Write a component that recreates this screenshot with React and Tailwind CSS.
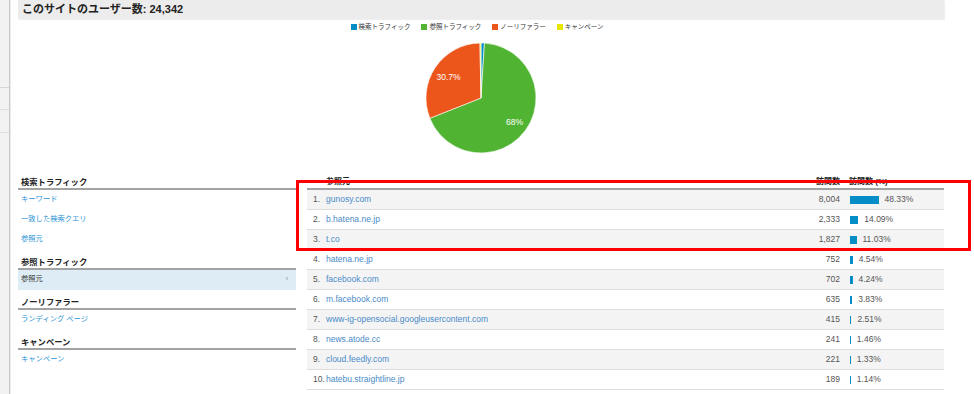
import React from "react";

const rows = [
  [1, "gunosy.com", "8,004", 48.33],
  [2, "b.hatena.ne.jp", "2,333", 14.09],
  [3, "t.co", "1,827", 11.03],
  [4, "hatena.ne.jp", "752", 4.54],
  [5, "facebook.com", "702", 4.24],
  [6, "m.facebook.com", "635", 3.83],
  [7, "www-ig-opensocial.googleusercontent.com", "415", 2.51],
  [8, "news.atode.cc", "241", 1.46],
  [9, "cloud.feedly.com", "221", 1.33],
  [10, "hatebu.straightline.jp", "189", 1.14],
];

const slices = [
  { a0: 0, a1: 3.6, c: "#058dc7" },
  { a0: 3.6, a1: 248.4, c: "#50b432" },
  { a0: 248.4, a1: 358.9, c: "#ed561b" },
  { a0: 358.9, a1: 360, c: "#edef00" },
];

function arcPath(a0, a1, r, cx, cy) {
  const rad = (d) => (d * Math.PI) / 180;
  const x0 = cx + r * Math.sin(rad(a0));
  const y0 = cy - r * Math.cos(rad(a0));
  const x1 = cx + r * Math.sin(rad(a1));
  const y1 = cy - r * Math.cos(rad(a1));
  const large = a1 - a0 > 180 ? 1 : 0;
  return `M${cx},${cy} L${x0},${y0} A${r},${r} 0 ${large} 1 ${x1},${y1} Z`;
}

function Pie() {
  return (
    <svg width="126" height="126" viewBox="0 0 126 126" className="mt-[4px]">
      {slices.map((s, i) => (
        <path key={i} d={arcPath(s.a0, s.a1, 55, 63, 63)} fill={s.c} stroke="#ffffff" strokeWidth="0.6" />
      ))}
      <text x="30.5" y="45" textAnchor="middle" fill="#ffffff" fontSize="8.5" fontFamily="Liberation Sans, sans-serif">30.7%</text>
      <text x="96.5" y="89.5" textAnchor="middle" fill="#ffffff" fontSize="8.5" fontFamily="Liberation Sans, sans-serif">68%</text>
    </svg>
  );
}

function Legend() {
  const items = [
    ["#058dc7", "検索トラフィック"],
    ["#50b432", "参照トラフィック"],
    ["#ed561b", "ノーリファラー"],
    ["#e6e800", "キャンペーン"],
  ];
  return (
    <div className="mt-[4px] flex h-[8px] items-center gap-[11px] pr-[8px] text-[6.5px] leading-[8px] text-[#333]">
      {items.map(([c, t]) => (
        <div key={t} className="flex items-center gap-[2px]">
          <span className="inline-block h-[6px] w-[6px]" style={{ background: c }} />
          <span>{t}</span>
        </div>
      ))}
    </div>
  );
}

function NavHeading({ children, first }) {
  return (
    <div className={`${first ? "" : "mt-[6px]"} h-[14px] border-b-2 border-[#a3a3a3] pl-[3px] text-[8.3px] font-bold leading-[12px] text-[#222]`}>
      {children}
    </div>
  );
}

function NavLink({ children }) {
  return (
    <div className="flex h-[20px] items-center pb-[1px] pl-[3px] text-[7.3px] text-[#2a93d5]">{children}</div>
  );
}

export default function App() {
  return (
    <div className="relative flex h-[394px] w-[974px] overflow-hidden bg-white font-['Liberation_Sans','Noto_Sans_CJK_JP',sans-serif]">
      <div className="flex w-[10px] shrink-0 flex-col border-r border-[#c9c9c9] bg-[#f2f2f2]">
        <div className="h-[88px] border-b border-[#d6d6d6]" />
        <div className="h-[22px] border-b border-[#dedede]" />
        <div className="h-[23px] border-b border-[#dedede]" />
      </div>
      <div className="w-px shrink-0 bg-[#ececec]" />
      <div className="flex w-[933px] flex-col pl-[7px]">
        <div className="flex h-[19px] items-center bg-[#ececec] pl-[4px] text-[11px] font-bold text-[#222] shadow-[1px_1px_1px_rgba(0,0,0,0.06)]">
          このサイトのユーザー数: 24,342
        </div>
        <div className="flex h-[157px] flex-col items-center">
          <Legend />
          <Pie />
        </div>
        <div className="flex gap-[11px]">
          <div className="flex w-[278px] flex-col">
            <NavHeading first>検索トラフィック</NavHeading>
            <NavLink>キーワード</NavLink>
            <NavLink>一致した検索クエリ</NavLink>
            <NavLink>参照元</NavLink>
            <NavHeading>参照トラフィック</NavHeading>
            <div className="flex h-[20px] items-center justify-between bg-[#deedf5] pb-[2px] pl-[3px] pr-[8px] text-[7.3px] text-[#333]">
              <span>参照元</span>
              <span className="text-[7px] text-[#888]">›</span>
            </div>
            <NavHeading>ノーリファラー</NavHeading>
            <NavLink>ランディング ページ</NavLink>
            <NavHeading>キャンペーン</NavHeading>
            <NavLink>キャンペーン</NavLink>
          </div>
          <div className="flex flex-1 flex-col">
            <div className="flex h-[14px] items-start border-b-2 border-[#a3a3a3] pl-[6px] text-[8px] font-bold leading-[12px] text-[#222]">
              <div className="w-[13px]" />
              <div className="flex-1 pl-0">参照元</div>
              <div className="w-[60px] text-right">訪問数</div>
              <div className="ml-[9px] w-[95px]">訪問数 (%)</div>
            </div>
            {rows.map(([n, site, visits, pct]) => (
              <div
                key={n}
                className={`flex h-[20px] items-center border-b border-[#dddddd] pl-[6px] text-[8.5px] ${n % 2 === 1 ? "bg-[#f4f4f4]" : "bg-white"}`}
              >
                <div className="w-[13px] text-[#555]">{n}.</div>
                <div className="flex-1 text-[#4a8bc8]">{site}</div>
                <div className="w-[60px] text-right text-[#555]">{visits}</div>
                <div className="ml-[10px] flex w-[94px] items-center">
                  <span className="inline-block h-[8px] bg-[#058dc7]" style={{ width: `${pct * 0.59}px` }} />
                  <span className="ml-[6px] text-[#555]">{pct.toFixed(2)}%</span>
                </div>
              </div>
            ))}
          </div>
        </div>
      </div>
      <div className="pointer-events-none absolute left-[296px] top-[180px] h-[71px] w-[675px] border-[3px] border-[#ff0000]" />
    </div>
  );
}
